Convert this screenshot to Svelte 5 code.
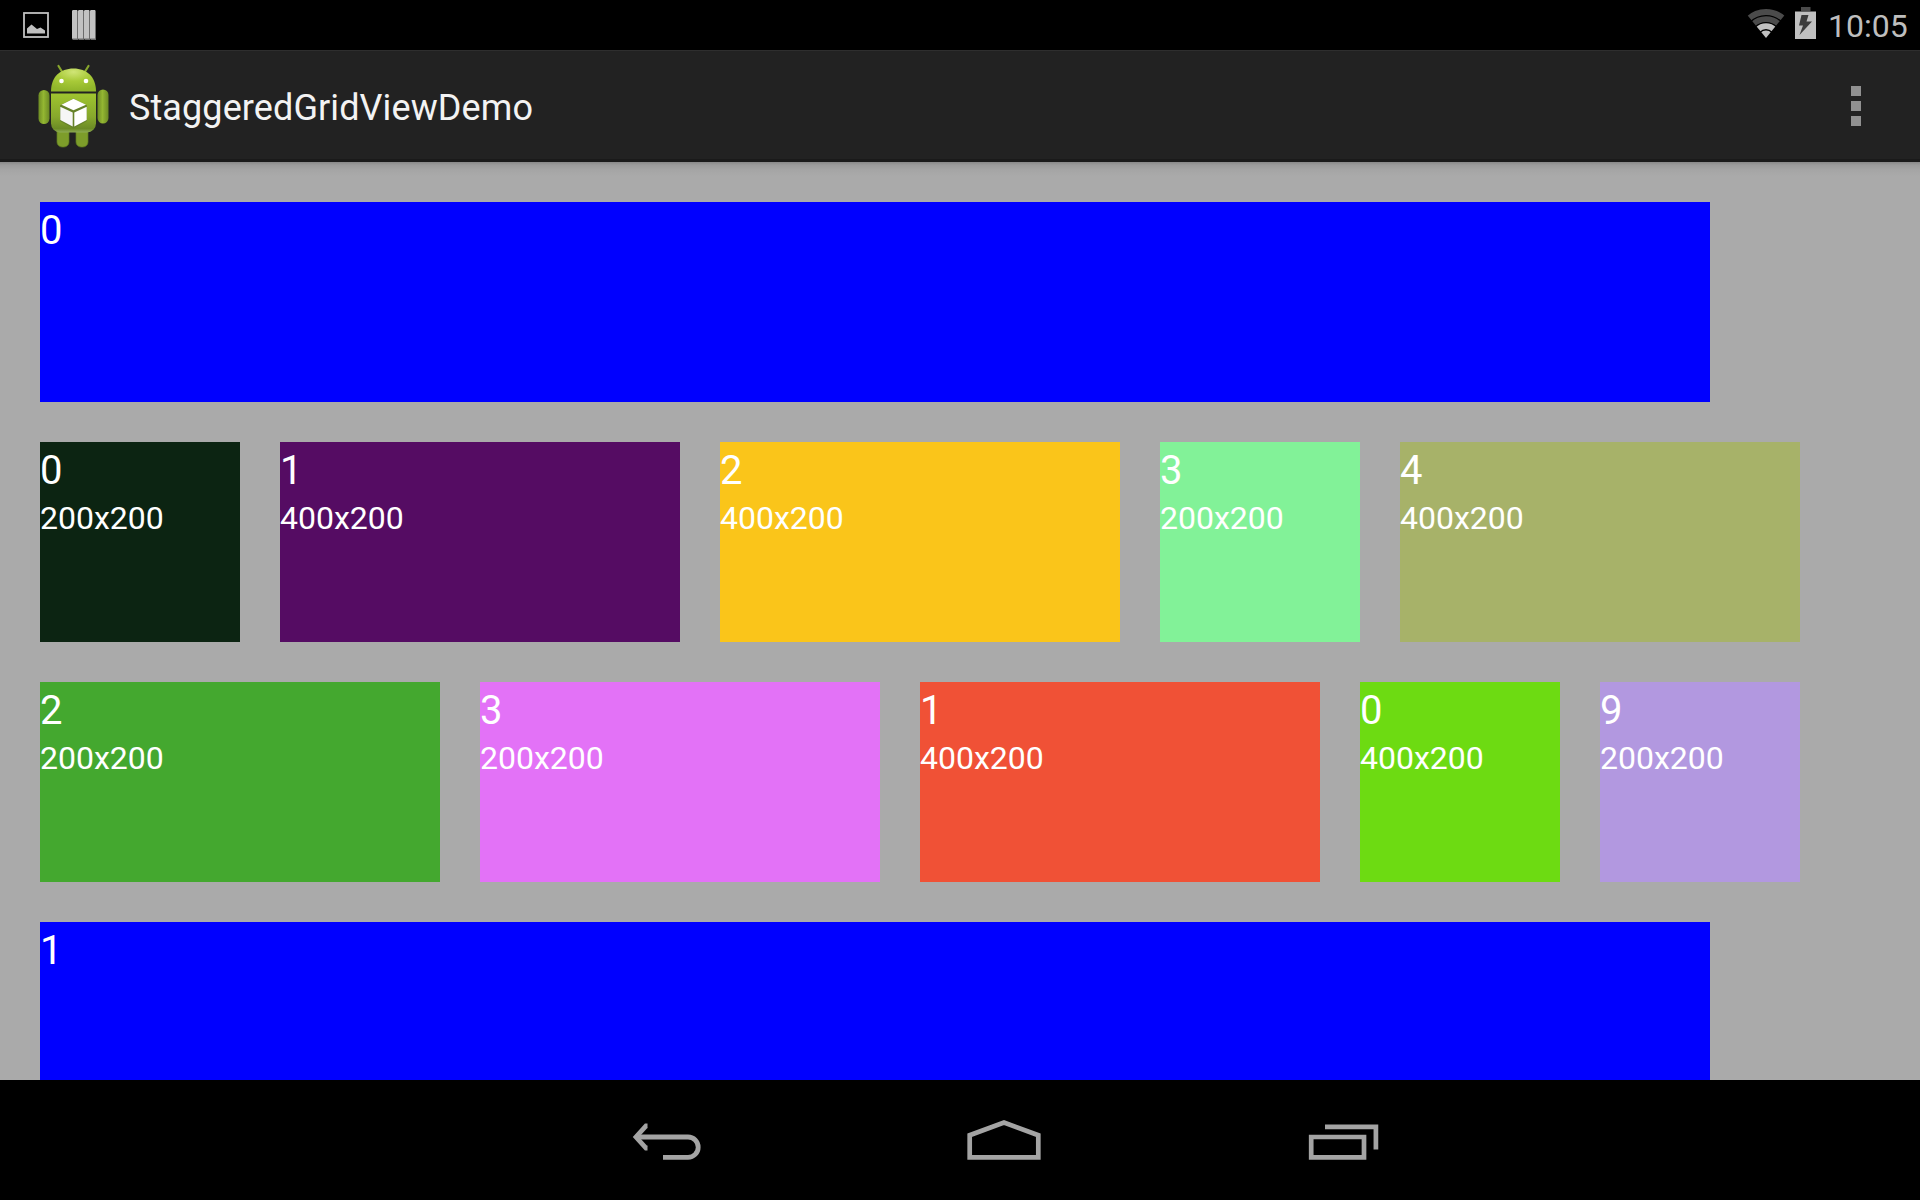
<script>
  const rows = [
    [
      { n: 0, size: '200x200', w: 200, c: '#0c2412' },
      { n: 1, size: '400x200', w: 400, c: '#550c63' },
      { n: 2, size: '400x200', w: 400, c: '#fac51a' },
      { n: 3, size: '200x200', w: 200, c: '#82f298' },
      { n: 4, size: '400x200', w: 400, c: '#a7b269' },
    ],
    [
      { n: 2, size: '200x200', w: 400, c: '#44a82f' },
      { n: 3, size: '200x200', w: 400, c: '#e372f7' },
      { n: 1, size: '400x200', w: 400, c: '#f05136' },
      { n: 0, size: '400x200', w: 200, c: '#6ddb12' },
      { n: 9, size: '200x200', w: 200, c: '#b298e0' },
    ],
  ];
</script>

<div class="screen">
  <header class="status">
    <svg class="picture" width="26" height="26" viewBox="0 0 26 26">
      <rect x="1" y="1" width="24" height="24" fill="none" stroke="#c0c0c0" stroke-width="1.8" />
      <path d="M4 21.500V16.500l4.500-4 5.500 4.500 3.500-1.500 4.500 3v3z" fill="#c0c0c0" />
    </svg>
    <svg class="bars" width="24" height="30" viewBox="0 0 24 30">
      {#each [0, 6, 12, 18] as x}
        <path d="M{x + 1} 0h4l1 1v29h-5l-1-1V1z" fill="#6c6c6c" />
        <path d="M{x + 1} 0h4v28.500h-5V1z" fill="#c2c2c2" />
      {/each}
    </svg>
    <span class="spacer"></span>
    <svg class="wifi" width="40" height="30" viewBox="0 0 40 30">
      <clipPath id="fan"><path d="M20 29-2 2V-4H42V2z" /></clipPath>
      <g clip-path="url(#fan)" fill="none">
        <circle cx="20" cy="29" r="26" stroke="#4b4b4b" stroke-width="6" />
        <circle cx="20" cy="29" r="18.800" stroke="#4b4b4b" stroke-width="5.800" />
        <circle cx="20" cy="29" r="11.800" stroke="#c0c0c0" stroke-width="5.800" />
        <circle cx="20" cy="29" r="7.600" fill="#c0c0c0" />
      </g>
    </svg>
    <svg class="battery" width="21" height="32" viewBox="0 0 21 32">
      <path d="M6 0h9.500v4H6z" fill="#4b4b4b" />
      <path d="M0 4.500h21V32H0z" fill="#c0c0c0" />
      <path d="M6.500 8h7l-2 6.500H17L4.500 28l3.500-9.500H4z" fill="#3c3c3c" />
    </svg>
    <span class="time">10:05</span>
  </header>

  <div class="actionbar">
    <svg class="robot" width="74" height="86" viewBox="36 63 74 86">
      <defs>
        <linearGradient id="torso" x1="0" y1="0" x2="0" y2="1">
          <stop offset="0" stop-color="#9fc52f" />
          <stop offset=".6" stop-color="#87a82c" />
          <stop offset=".9" stop-color="#6c8b25" />
          <stop offset="1" stop-color="#8fad55" />
        </linearGradient>
        <radialGradient id="dome" cx=".5" cy=".15" r=".8">
          <stop offset="0" stop-color="#d0e576" />
          <stop offset=".5" stop-color="#a8ca38" />
          <stop offset="1" stop-color="#91b62b" />
        </radialGradient>
        <linearGradient id="limb" x1="0" y1="0" x2="1" y2="0">
          <stop offset="0" stop-color="#6d8b24" />
          <stop offset=".45" stop-color="#94b732" />
          <stop offset="1" stop-color="#6b8924" />
        </linearGradient>
      </defs>
      <path d="M58.500 66l5 8M88.500 66l-5 8" stroke="#87a62c" stroke-width="2.200" stroke-linecap="round" />
      <path d="M57 128h12v14a5 5 0 0 1-5 5h-2a5 5 0 0 1-5-5zM76 128h12v14a5 5 0 0 1-5 5h-2a5 5 0 0 1-5-5z" fill="#7d9d2a" stroke="#5f7b20" stroke-width=".7" />
      <rect x="38.500" y="90" width="11" height="34" rx="5.500" fill="url(#limb)" />
      <rect x="97.500" y="89.500" width="11" height="34" rx="5.500" fill="url(#limb)" />
      <path d="M51 91.500C51 77 60 68.500 73.500 68.500S96 77 96 91.500z" fill="url(#dome)" />
      <path d="M51 93.500h45v30a9 9 0 0 1-9 9H60a9 9 0 0 1-9-9z" fill="url(#torso)" />
      <circle cx="61.500" cy="81" r="2.300" fill="#fff" />
      <circle cx="86" cy="81" r="2.300" fill="#fff" />
      <path d="M60 105.500 73.500 98.500 87 105.500V121L73.500 128.500 60 121z" fill="#66822a" />
      <path d="M61.500 104.800 73.500 98.800 86 104.800 73.500 110.300z" fill="#fff" />
      <path d="M60.300 106.700 72.700 112.500V126.500L60.300 120z" fill="#f6f6f6" />
      <path d="M86.700 106.700 74.300 112.500V126.500L86.700 120z" fill="#fff" />
    </svg>
    <h1>StaggeredGridViewDemo</h1>
    <div class="overflow"><i></i><i></i><i></i></div>
  </div>

  <main>
    <section class="tile banner"><b>0</b></section>
    {#each rows as row}
      <div class="row">
        {#each row as t}
          <div class="tile" style="width:{t.w}px;background:{t.c}">
            <b>{t.n}</b>
            <span>{t.size}</span>
          </div>
        {/each}
      </div>
    {/each}
    <section class="tile banner"><b>1</b></section>
  </main>

  <nav>
    <svg width="72" height="44" viewBox="630 1118 72 44">
      <g fill="none" stroke="#a4a4a4" stroke-width="4.800">
        <path d="M637 1137h51a10.200 10.200 0 0 1 0 20.400h-25" />
        <path d="M647.500 1125.800h-1.500L636 1137l10 11h1.500" />
      </g>
    </svg>
    <svg width="80" height="44" viewBox="964 1118 80 44">
      <path d="M969.700 1157.400v-22.200L1004 1122.600l34.300 12.600v22.200z" fill="none" stroke="#a4a4a4" stroke-width="4.700" />
    </svg>
    <svg width="76" height="44" viewBox="1306 1118 76 44">
      <path d="M1311.200 1137h52.800v20.400h-52.800zM1325 1126.800h50.900v22.600" fill="none" stroke="#a4a4a4" stroke-width="4.700" />
    </svg>
  </nav>
</div>

<style>
  :global(body) { margin: 0; background: #000; }
  .screen {
    width: 1920px;
    height: 1200px;
    display: flex;
    flex-direction: column;
    overflow: hidden;
    font-family: Roboto, sans-serif;
    color: #fff;
    background: #000;
  }
  svg { display: block; flex: none; }
  .status {
    height: 50px;
    flex: none;
    box-sizing: border-box;
    padding: 0 12px 0 23px;
    display: flex;
    align-items: center;
  }
  .bars { margin-left: 23px; }
  .spacer { flex: 1; }
  .wifi { margin: 0 9px 2px 0; }
  .battery { margin-right: 12px; margin-bottom: 4px; }
  .time {
    width: 80px;
    padding-top: 2px;
    font-size: 32px;
    line-height: 50px;
    color: #bebebe;
    white-space: nowrap;
  }
  .actionbar {
    height: 112px;
    flex: none;
    box-sizing: border-box;
    padding: 2px 59px 0 36px;
    display: flex;
    align-items: center;
    background: #222;
    border-top: 1px solid #2e2e2e;
    border-bottom: 3px solid #1a1a1a;
  }
  h1 {
    margin: 0 auto 0 19px;
    padding-top: 4px;
    font-size: 36px;
    line-height: 44px;
    letter-spacing: 0.1px;
    font-weight: 400;
    color: #f3f3f3;
  }
  .overflow { display: flex; flex-direction: column; gap: 5px; }
  .overflow i { width: 10px; height: 10px; background: #919191; }
  main {
    height: 918px;
    flex: none;
    box-sizing: border-box;
    padding: 40px 0 0 40px;
    display: flex;
    flex-direction: column;
    gap: 40px;
    overflow: hidden;
    background: linear-gradient(#888 0, #9b9b9b 3px, #a5a5a5 8px, #aaa 14px);
  }
  .row { display: flex; gap: 40px; }
  .tile {
    height: 200px;
    flex: none;
    box-sizing: border-box;
    padding-top: 5px;
    display: flex;
    flex-direction: column;
  }
  .banner { width: 1670px; background: #00f; }
  b { font-weight: 400; font-size: 40px; line-height: 47px; }
  .tile span { font-size: 32px; line-height: 49px; }
  nav {
    height: 120px;
    flex: none;
    box-sizing: border-box;
    padding: 0 538px 0 630px;
    display: flex;
    align-items: center;
    justify-content: space-between;
  }
</style>
